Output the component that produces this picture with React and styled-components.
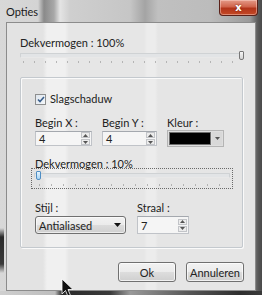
import React from "react";
import styled, { createGlobalStyle } from "styled-components";

const Global = createGlobalStyle`
  html, body { margin: 0; padding: 0; background: #9a9a9a; }
  body { width: 262px; height: 295px; overflow: hidden; font-family: Lato, "Noto Sans", sans-serif; }
`;

const Window = styled.div`
  position: relative;
  width: 262px;
  height: 295px;
  box-sizing: border-box;
  display: flex;
  flex-direction: column;
  background: linear-gradient(90deg, #d8d8d8 0px, #d4d4d4 38px, #8a8a8a 44px, #a8a8a8 54px, #e4e4e4 60px, #cfcfcf 70px, #c6c6c6 130px, #a4a4a4 145px, #c0c0c0 158px, #bcbcbc 210px, #9a9a9a 250px, #5a5a5a 258px, #4a4a4a 262px);
`;

const TitleBar = styled.div`
  height: 22px;
  flex: none;
  display: flex;
  align-items: flex-start;
  justify-content: space-between;
`;

const Title = styled.div`
  font-size: 11px;
  line-height: 12px;
  color: #1a1a1a;
  padding: 6px 0 0 6px;
`;

const CloseButton = styled.div`
  width: 39px;
  height: 16px;
  margin-right: 4px;
  box-sizing: border-box;
  border: 1px solid #5a2018;
  border-top: none;
  border-radius: 0 0 4px 4px;
  background: linear-gradient(180deg, #e49a88 0%, #d0644c 45%, #b2341a 55%, #c44a26 100%);
  box-shadow: inset 0 0 0 1px rgba(255, 220, 210, 0.45);
  display: flex;
  align-items: center;
  justify-content: center;
  color: #fff;
  font-family: "DejaVu Sans", sans-serif;
  font-weight: bold;
  font-size: 10px;
  line-height: 10px;
  text-shadow: 0 0 2px #6a1a0a;
`;

const Client = styled.div`
  flex: none;
  margin: 0 6px 0 6px;
  height: 269px;
  box-sizing: border-box;
  border: 1px solid #8c8c8c;
  background: linear-gradient(90deg, #e3e3e3 0px, #e3e3e3 36px, #f0f0f0 40px, #f0f0f0 58px, #e6e6e6 62px, #e6e6e6 137px, #ececec 140px, #ececec 148px, #e5e5e5 151px);
  padding: 14px 0 0 13px;
  display: flex;
  flex-direction: column;
`;

const Label = styled.div`
  font-size: 11px;
  line-height: 12px;
  color: #222;
  white-space: nowrap;
`;

const SliderWrap = styled.div`
  position: relative;
  width: ${(p) => p.$w}px;
  height: ${(p) => p.$h}px;
  margin-top: ${(p) => p.$mt}px;
  margin-left: ${(p) => p.$ml || 0}px;
  box-sizing: border-box;
  border: ${(p) => (p.$focus ? "1px dotted #6a6a6a" : "none")};
`;

const Track = styled.div`
  position: absolute;
  left: ${(p) => p.$l}px;
  right: ${(p) => p.$r}px;
  top: ${(p) => p.$t}px;
  height: 5px;
  box-sizing: border-box;
  border: 1px solid #cfd2d4;
  border-bottom-color: #e8e8e8;
  background: #e2e4e6;
  border-radius: 1px;
`;

const Ticks = styled.div`
  position: absolute;
  left: ${(p) => p.$l}px;
  right: ${(p) => p.$r}px;
  top: ${(p) => p.$t}px;
  height: 2px;
  background: repeating-linear-gradient(90deg, #a8a8a8 0 1px, transparent 1px ${(p) => p.$step}px);
  opacity: 0.8;
`;

const Thumb = styled.div`
  position: absolute;
  left: ${(p) => p.$l}px;
  top: ${(p) => p.$t}px;
  width: 5px;
  height: 9px;
  box-sizing: border-box;
  border: 1px solid ${(p) => (p.$blue ? "#4f8ec4" : "#777")};
  border-radius: 1px 1px 2px 2px;
  background: ${(p) => (p.$blue ? "linear-gradient(180deg,#e4f4ff,#a8d4f4)" : "linear-gradient(180deg,#f6f6f6,#d4d4d4)")};
`;

const GroupBox = styled.div`
  margin-top: 11px;
  width: 223px;
  height: 171px;
  box-sizing: border-box;
  border: 1px solid #c4c9ce;
  border-radius: 2px;
  box-shadow: inset 1px 1px 0 #fafafa, 1px 1px 0 #fafafa;
  padding: 15px 0 0 14px;
  display: flex;
  flex-direction: column;
`;

const CheckRow = styled.div`
  display: flex;
  align-items: center;
  gap: 4px;
`;

const CheckBox = styled.div`
  width: 11px;
  height: 11px;
  box-sizing: border-box;
  border: 1px solid #8e8f8f;
  background: linear-gradient(135deg, #dfe6ee, #f4f7fa);
  display: flex;
  align-items: center;
  justify-content: center;
`;

const FieldRow = styled.div`
  display: grid;
  grid-template-columns: ${(p) => p.$cols};
  column-gap: ${(p) => p.$gap}px;
  margin-top: ${(p) => p.$mt}px;
`;

const Field = styled.div`
  display: flex;
  flex-direction: column;
  gap: 2px;
`;

const Input = styled.div`
  height: ${(p) => p.$h || 15}px;
  box-sizing: border-box;
  border: 1px solid #c0c3c8;
  border-top-color: #a4a8ae;
  background: #f5f5f5;
  display: flex;
  align-items: center;
  justify-content: space-between;
  padding-left: 3px;
  font-size: 11px;
  color: #222;
`;

const Spinner = styled.div`
  width: 9px;
  height: 100%;
  display: flex;
  flex-direction: column;
  justify-content: center;
  gap: 1px;
  margin-right: 1px;
`;

const SpinBtn = styled.div`
  height: 6px;
  box-sizing: border-box;
  border: 1px solid #c2c4c8;
  background: #ececec;
  display: flex;
  align-items: center;
  justify-content: center;
`;

const ColorPick = styled.div`
  height: 17px;
  margin-top: -1px;
  box-sizing: border-box;
  border: 1px solid #b4b4b4;
  background: #dedede;
  display: flex;
  align-items: stretch;
  padding: 1px;
  gap: 1px;
`;

const Swatch = styled.div`
  flex: 1;
  background: #000;
  border: 1px solid #6e6e6e;
`;

const DropBtn = styled.div`
  width: 10px;
  display: flex;
  align-items: center;
  justify-content: center;
  background: #d8d8d8;
`;

const Select = styled.div`
  height: 18px;
  box-sizing: border-box;
  border: 1px solid #707070;
  border-radius: 3px;
  background: linear-gradient(180deg, #f2f2f2 0%, #ebebeb 50%, #dcdcdc 51%, #cfcfcf 100%);
  box-shadow: inset 0 0 0 1px rgba(255, 255, 255, 0.6);
  display: flex;
  align-items: center;
  justify-content: space-between;
  padding: 0 4px 0 3px;
  font-size: 11px;
  color: #222;
`;

const Footer = styled.div`
  display: flex;
  gap: 10px;
  justify-content: flex-end;
  width: 224px;
  margin-top: 14px;
`;

const Button = styled.div`
  width: 58px;
  height: 20px;
  box-sizing: border-box;
  border: 1px solid #707070;
  border-radius: 3px;
  background: linear-gradient(180deg, #f2f2f2 0%, #ebebeb 50%, #dddddd 51%, #cfcfcf 100%);
  box-shadow: inset 0 0 0 1px rgba(255, 255, 255, 0.7);
  display: flex;
  align-items: center;
  justify-content: center;
  font-size: 11px;
  color: #222;
`;

const Cursor = styled.svg`
  position: absolute;
  left: 61px;
  top: 278px;
`;

const Smudge = styled.div`
  position: absolute;
  left: 0;
  top: 228px;
  width: 4px;
  height: 45px;
  background: linear-gradient(180deg, transparent, #2a2a2a 20%, #3a3a3a 80%, transparent);
`;

const BottomEdge = styled.div`
  flex: 1;
  background: linear-gradient(90deg, #cfcfcf 0px, #bdbdbd 55px, #2a2a2a 62px, #3a3a3a 110px, #9a9a9a 130px, #555 190px, #2e2e2e 240px, #3a3a3a 262px);
`;

const Up = () => (
  <svg width="5" height="3" viewBox="0 0 5 3"><path d="M0 3 L2.5 0 L5 3Z" fill="#555" /></svg>
);
const Down = () => (
  <svg width="5" height="3" viewBox="0 0 5 3"><path d="M0 0 L2.5 3 L5 0Z" fill="#555" /></svg>
);

const Spin = () => (
  <Spinner>
    <SpinBtn><Up /></SpinBtn>
    <SpinBtn><Down /></SpinBtn>
  </Spinner>
);

export default function App() {
  return (
    <>
      <Global />
      <Window>
        <TitleBar>
          <Title>Opties</Title>
          <CloseButton>x</CloseButton>
        </TitleBar>
        <Client>
          <Label>Dekvermogen : 100%</Label>
          <SliderWrap $w={225} $h={16} $mt={1}>
            <Track $l={0} $r={2} $t={3} />
            <Ticks $l={3} $r={5} $t={11} $step={11} />
            <Thumb $l={219} $t={1} />
          </SliderWrap>
          <GroupBox>
            <CheckRow>
              <CheckBox>
                <svg width="8" height="7" viewBox="0 0 8 7">
                  <path d="M1 3.5 L3 5.5 L7 1" stroke="#3a5f8c" strokeWidth="1.6" fill="none" />
                </svg>
              </CheckBox>
              <Label>Slagschaduw</Label>
            </CheckRow>
            <FieldRow $cols="57px 55px 57px" $gap={10} $mt={12}>
              <Field>
                <Label>Begin X :</Label>
                <Input>4<Spin /></Input>
              </Field>
              <Field>
                <Label>Begin Y :</Label>
                <Input>4<Spin /></Input>
              </Field>
              <Field>
                <Label>Kleur :</Label>
                <ColorPick>
                  <Swatch />
                  <DropBtn><Down /></DropBtn>
                </ColorPick>
              </Field>
            </FieldRow>
            <FieldRow $cols="auto" $gap={0} $mt={11}>
              <Field>
                <Label>Dekvermogen : 10%</Label>
                <SliderWrap $w={202} $h={21} $mt={-4} $ml={-4} $focus>
                  <Track $l={2} $r={2} $t={4} />
                  <Ticks $l={7} $r={8} $t={15} $step={12} />
                  <Thumb $l={4} $t={2} $blue />
                </SliderWrap>
              </Field>
            </FieldRow>
            <FieldRow $cols="91px 52px" $gap={11} $mt={13}>
              <Field>
                <Label>Stijl :</Label>
                <Select>
                  Antialiased
                  <svg width="7" height="4" viewBox="0 0 7 4"><path d="M0 0 L3.5 4 L7 0Z" fill="#111" /></svg>
                </Select>
              </Field>
              <Field>
                <Label>Straal :</Label>
                <Input $h={18}>7<Spin /></Input>
              </Field>
            </FieldRow>
          </GroupBox>
          <Footer>
            <Button>Ok</Button>
            <Button>Annuleren</Button>
          </Footer>
        </Client>
        <BottomEdge />
        <Smudge />
        <Cursor width="14" height="20" viewBox="0 0 14 20">
          <path d="M1 1 L1 16 L4.5 12.5 L7 18.5 L9.5 17.5 L7 11.5 L12 11.5 Z" fill="#111" stroke="#fff" strokeWidth="0.8" />
        </Cursor>
      </Window>
    </>
  );
}
